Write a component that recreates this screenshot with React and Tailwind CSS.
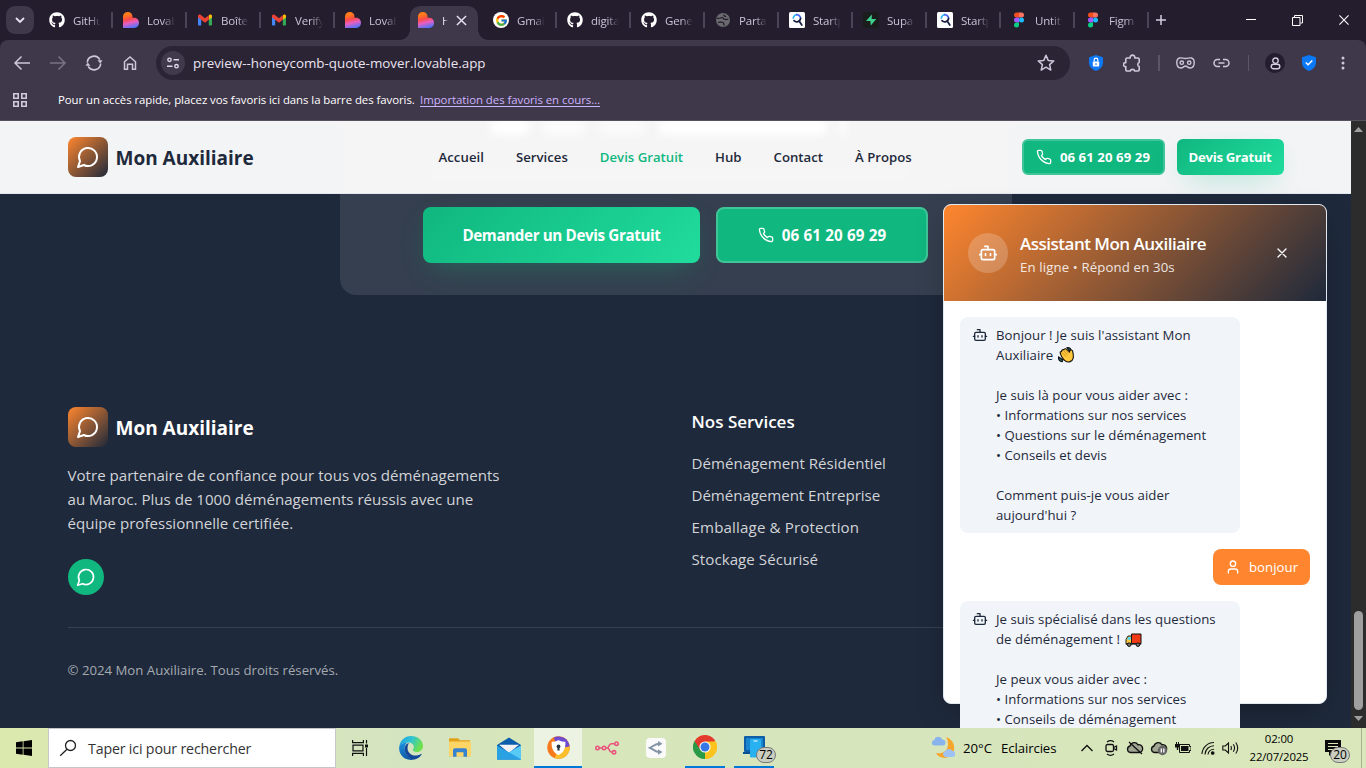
import React from "react";
import { FaGithub } from "react-icons/fa";
import { FcGoogle } from "react-icons/fc";

/* ---------- site icons ---------- */

const Stroke = ({ className, width = 2, children }) => (
  <svg className={className} viewBox="0 0 24 24" fill="none" stroke="currentColor" strokeWidth={width} strokeLinecap="round" strokeLinejoin="round">
    {children}
  </svg>
);

const ChatIcon = ({ className }) => (
  <Stroke className={className}>
    <path d="M7.9 20A9 9 0 1 0 4 16.1L2 22Z" />
  </Stroke>
);

const PhoneIcon = ({ className }) => (
  <Stroke className={className}>
    <path d="M22 16.92v3a2 2 0 0 1-2.18 2 19.79 19.79 0 0 1-8.63-3.07 19.5 19.5 0 0 1-6-6 19.79 19.79 0 0 1-3.07-8.67A2 2 0 0 1 4.11 2h3a2 2 0 0 1 2 1.72 12.84 12.84 0 0 0 .7 2.81 2 2 0 0 1-.45 2.11L8.09 9.91a16 16 0 0 0 6 6l1.27-1.27a2 2 0 0 1 2.11-.45 12.84 12.84 0 0 0 2.81.7A2 2 0 0 1 22 16.92z" />
  </Stroke>
);

const BotIcon = ({ className }) => (
  <Stroke className={className}>
    <path d="M12 8V4H8" />
    <rect width="16" height="12" x="4" y="8" rx="2" />
    <path d="M2 14h2M20 14h2M15 13v2M9 13v2" />
  </Stroke>
);

const UserIcon = ({ className }) => (
  <Stroke className={className}>
    <path d="M19 21v-2a4 4 0 0 0-4-4H9a4 4 0 0 0-4 4v2" />
    <circle cx="12" cy="7" r="4" />
  </Stroke>
);

const WaveHand = () => (
  <svg className="ml-[1px] inline-block size-4 align-[-3px]" viewBox="0 0 16 16">
    <path d="M9 .8c2-.6 3.600.3 4 2.200l-1.500.6zM.6 10c-.6 2.200 1 4.600 3.600 4.700l.7-1.700z" fill="#1c6f80" stroke="#111" strokeWidth="1.100" />
    <path d="M2.300 6.200c-.4-.9.2-2 1.200-1.600C3.600 3.200 4.600 2.300 5.800 2.800 6.300 1.500 8 1.500 8.700 2.400l2.800 2.600.3-1.400c.8-1.300 2.700-.6 2.900.7.3 1.800 1 4.200.5 6.800-.8 3.500-4.900 4.900-7.800 2.900C5.400 12.700 2.700 9 2.300 6.200z" fill="#ffc83d" stroke="#15120b" strokeWidth="1.100" />
    <path d="M4 5.400l4 4.200M5.900 4L9.500 7.900M8.200 3.500L11 6.500" stroke="#b87c0c" strokeWidth=".7" fill="none" />
  </svg>
);

const Truck = () => (
  <svg className="ml-[2px] inline-block h-4 w-[17px] align-[-4px]" viewBox="0 0 17 16">
    <path d="M6.500 2h9.500v9.500H6.500z" fill="#f03a17" stroke="#111" strokeWidth="1" />
    <path d="M1 11.800V7.500L3 4h3.500v7.800z" fill="#ffc83d" stroke="#111" strokeWidth=".9" />
    <path d="M2 7.800l1.400-2.800h2.300v2.800z" fill="#50d9ff" />
    <path d="M.8 11.300h15.400v1.400H.8z" fill="#222" />
    <circle cx="4.200" cy="12.700" r="1.800" fill="#777" stroke="#111" />
    <circle cx="12.900" cy="12.700" r="1.800" fill="#777" stroke="#111" />
  </svg>
);

/* ---------- favicons ---------- */

const Heart = () => (
  <svg className="size-4 shrink-0" viewBox="0 0 16 16">
    <defs>
      <linearGradient id="lov" x1=".35" y1="0" x2=".6" y2="1">
        <stop offset=".15" stopColor="#ff7a1a" />
        <stop offset=".42" stopColor="#fb4a4a" />
        <stop offset=".65" stopColor="#e85fc0" />
        <stop offset="1" stopColor="#4b73ff" />
      </linearGradient>
    </defs>
    <path d="M0 4.700C0 2 2 0 4.700 0S9.500 2 9.500 4.800v1h1.700C14 5.800 16 8 16 10.800S14 16 11.200 16H0z" fill="url(#lov)" />
  </svg>
);

const GmailIcon = () => (
  <svg className="size-4 shrink-0" viewBox="0 0 16 16">
    <path d="M1 4v8.500c0 .6.4 1 1 1h2.200V7z" fill="#4285f4" />
    <path d="M15 4v8.500c0 .6-.4 1-1 1h-2.200V7z" fill="#34a853" />
    <path d="M11.800 3.700V7.800L15 5.400V4c0-1.400-1.500-2-2.500-1.200z" fill="#fbbc04" />
    <path d="M1 4c0-1.400 1.500-2 2.500-1.200L8 6.200l3.800-2.900v4.500L8 10.700 4.200 7.800 1 5.400z" fill="#ea4335" />
  </svg>
);

const GithubIcon = () => <FaGithub className="size-4 shrink-0 text-white" />;

const GoogleIcon = () => (
  <span className="flex size-4 shrink-0 items-center justify-center rounded-full bg-white">
    <FcGoogle className="size-[13px]" />
  </span>
);

const GlobeIcon = () => (
  <svg className="size-4 shrink-0" viewBox="0 0 16 16">
    <circle cx="8" cy="8" r="7" fill="#6b6a6f" />
    <path d="M2 6.300c2.500.6 3.800-1 5.500-.6 1.200.3 1 1.500 2.300 1.700 1.500.3 2.400-.2 3.500 0M3 10.500c1.800-.8 3-.3 4.500-.2 1.300.2 1.700 1.600 1.300 3.200M9 2.500c-.2 1.300.8 2 2.200 1.800" stroke="#241d2e" strokeWidth="1.300" fill="none" />
  </svg>
);

const StartIcon = () => (
  <svg className="size-4 shrink-0" viewBox="0 0 16 16">
    <rect width="16" height="16" rx="1.500" fill="#fff" />
    <path d="M4.300 6.800A4 4 0 0 1 8 2.600" stroke="#26b6f5" strokeWidth="1.700" fill="none" />
    <path d="M7 2.700a4 4 0 0 1 4.600 3.600" stroke="#4f6cf2" strokeWidth="1.700" fill="none" />
    <path d="M11.600 6.300A3.900 3.900 0 0 1 5 8.700M10.300 9.200l2.500 3.800" stroke="#1b2140" strokeWidth="1.800" fill="none" strokeLinecap="round" />
  </svg>
);

const SupaIcon = () => (
  <svg className="size-4 shrink-0" viewBox="0 0 16 16">
    <rect width="16" height="16" rx="1" fill="#1b1c1c" />
    <path d="M8.800 2.500L3 8.900h5.200v4.300z" fill="#3ecf8e" />
    <path d="M7.800 13.500L13.300 7H8.200l.6-4.500-1.400 4.400v3z" fill="#3ecf8e" />
  </svg>
);

const FigmaIcon = () => (
  <svg className="size-4 shrink-0" viewBox="0 0 16 16">
    <path d="M5.500.5H8v5H5.500a2.500 2.500 0 0 1 0-5z" fill="#f24e1e" />
    <path d="M8 .5h2.500a2.500 2.500 0 0 1 0 5H8z" fill="#ff7262" />
    <path d="M5.500 5.500H8v5H5.500a2.500 2.500 0 0 1 0-5z" fill="#a259ff" />
    <circle cx="10.500" cy="8" r="2.500" fill="#1abcfe" />
    <path d="M5.500 10.500H8V13a2.500 2.500 0 1 1-2.500-2.500z" fill="#0acf83" />
  </svg>
);

/* ---------- browser ---------- */

const tabs = [
  [GithubIcon, "GitHu"],
  [Heart, "Lovab"],
  [GmailIcon, "Boîte"],
  [GmailIcon, "Verify"],
  [Heart, "Lovab"],
  [Heart, "H", true],
  [GoogleIcon, "Gmai"],
  [GithubIcon, "digita"],
  [GithubIcon, "Gene"],
  [GlobeIcon, "Parta"],
  [StartIcon, "Startp"],
  [SupaIcon, "Supa"],
  [StartIcon, "Startp"],
  [FigmaIcon, "Untit"],
  [FigmaIcon, "Figm"],
];

function Tab({ Icon, label, active, divider }) {
  if (active) {
    return (
      <div className="relative h-10 w-[74px] shrink-0 pt-1.5">
        <div className="relative ml-[1px] flex h-[34px] w-[68px] items-center rounded-t-[10px] bg-[#3f374a] pb-[6px] pl-2">
          <Icon />
          <span className="mt-px ml-2 w-[9px] text-[#e6e0ee] [mask-image:linear-gradient(to_right,#000_2px,transparent_6px)]">{label}</span>
          <svg className="ml-[5px] size-[11px]" viewBox="0 0 12 12" stroke="#e8e2f0" strokeWidth="1.600">
            <path d="M1 1l10 10M11 1L1 11" />
          </svg>
          <i className="absolute bottom-0 -left-[10px] size-[10px] bg-[radial-gradient(circle_at_0_0,transparent_9.500px,#3f374a_10px)]" />
          <i className="absolute -right-[10px] bottom-0 size-[10px] bg-[radial-gradient(circle_at_100%_0,transparent_9.500px,#3f374a_10px)]" />
        </div>
      </div>
    );
  }
  return (
    <div className="flex h-10 w-[74px] shrink-0 items-center pl-2.5">
      <Icon />
      <span className="mt-[2px] ml-2 w-[34px] whitespace-nowrap text-[#cbc3d6] [mask-image:linear-gradient(to_right,#000_16px,transparent_28px)]">{label}</span>
      <i className={divider ? "ml-[4px] h-4 w-[1.500px] shrink-0 bg-[#4b4356]" : "w-0"} />
    </div>
  );
}

function Browser() {
  return (
    <div className="h-[121px] shrink-0 bg-[#241d2e] font-['Open_Sans','Noto_Sans',sans-serif]">
      <div className="flex h-10 items-center text-[11.500px] tracking-[-0.2px]">
        <div className="mx-1.5 flex h-7 w-[28px] items-center justify-center rounded-[9px] bg-[#3f374a]">
          <svg className="size-[10px]" viewBox="0 0 10 10" fill="none" stroke="#e8e2f0" strokeWidth="1.800">
            <path d="M1 3l4 4 4-4" />
          </svg>
        </div>
        <div className="-ml-[1px] flex w-[1108px]">
          {tabs.map(([Icon, label, active], i) => (
            <Tab key={i} Icon={Icon} label={label} active={active} divider={i !== 4} />
          ))}
        </div>
        <svg className="ml-2 size-3" viewBox="0 0 12 12" stroke="#d5cde0" strokeWidth="1.500">
          <path d="M6 1v10M1 6h10" />
        </svg>
        <div className="ml-auto flex items-center gap-9 pr-[17px]">
          <svg className="size-[10px]" viewBox="0 0 10 10"><path d="M0 4.500h10" stroke="#fff" /></svg>
          <svg className="size-[11px]" viewBox="0 0 11 11" fill="none" stroke="#fff"><path d="M.5 2.500h7.500v8H.5zM2.500 2.500v-2h8v7.500h-2" /></svg>
          <svg className="size-[10px]" viewBox="0 0 11 11" stroke="#fff" strokeWidth="1.200"><path d="M.5.5l10 10M10.500.5l-10 10" /></svg>
        </div>
      </div>

      <div className="h-[81px] rounded-t-[8px] border-b border-[#56505f] bg-[#3f374a]">
        <div className="flex h-[46px] items-center">
          <div className="flex w-[156px] items-center pl-[13px]">
            <svg className="size-[18px]" viewBox="0 0 18 18" fill="none" stroke="#cfc6dc" strokeWidth="1.500"><path d="M17 9H2M8.500 2.500L2 9l6.500 6.500" /></svg>
            <svg className="ml-[18px] size-[18px]" viewBox="0 0 18 18" fill="none" stroke="#7b7287" strokeWidth="1.500"><path d="M1 9h15M9.500 2.500L16 9l-6.500 6.500" /></svg>
            <svg className="ml-[18px] size-[18px]" viewBox="0 0 18 18" fill="none" stroke="#cfc6dc" strokeWidth="1.600">
              <path d="M2.300 8.500A6.700 6.700 0 0 1 14.800 5.600M15.700 9.500A6.700 6.700 0 0 1 3.200 12.400" />
              <path d="M12.500 6.300h5L15.300 9.600zM.5 11.700h5L2.700 8.400z" fill="#cfc6dc" stroke="none" />
            </svg>
            <svg className="ml-[19px] size-4" viewBox="0 0 16 16" fill="none" stroke="#cfc6dc" strokeWidth="1.500"><path d="M2.500 6.800L8 2l5.500 4.800v7.400h-3V9.300h-5v4.900h-3z" /></svg>
          </div>
          <div className="flex h-[34px] w-[914px] items-center rounded-full bg-[#2b2434] pr-[15px] pl-[5px]">
            <span className="flex size-6 items-center justify-center rounded-full bg-[#413a4d]">
              <svg className="size-[14px]" viewBox="0 0 14 14" fill="none" stroke="#e0d9ea" strokeWidth="1.400">
                <circle cx="3.500" cy="3.800" r="1.700" /><path d="M7.500 3.800H13M1 10.200h5.500" /><circle cx="10.500" cy="10.200" r="1.700" />
              </svg>
            </span>
            <span className="mt-px ml-2 text-[13.400px] text-[#e9e3f0]">preview--honeycomb-quote-mover.lovable.app</span>
            <svg className="ml-auto size-[18px]" viewBox="0 0 18 18" fill="none" stroke="#cfc6dc" strokeWidth="1.500" strokeLinejoin="round">
              <path d="M9 1.200l2.200 5.200 5.600.5-4.200 3.700 1.200 5.500L9 13.200l-4.800 2.900 1.200-5.500L1.200 6.900l5.600-.5z" />
            </svg>
          </div>
          <div className="flex flex-1 items-center">
            <svg className="ml-[18px] h-4 w-4" viewBox="0 0 16 16">
              <path d="M8 0l7 2.200v5.300c0 4-2.600 6.800-7 8.500-4.400-1.700-7-4.500-7-8.500V2.200z" fill="#0b78f5" />
              <rect x="4.800" y="6.500" width="6.400" height="5" rx=".8" fill="#fff" /><path d="M6.200 6.500V5a1.800 1.800 0 0 1 3.600 0v1.500" fill="none" stroke="#fff" strokeWidth="1.200" /><path d="M8 8.200v1.800" stroke="#0b78f5" strokeWidth="1.200" />
            </svg>
            <svg className="ml-[19px] size-[19px]" viewBox="0 0 19 19" fill="none" stroke="#cfc6dc" strokeWidth="1.600" strokeLinejoin="round">
              <path d="M4 4h3.200c-.6-3.800 5.200-3.800 4.600 0H15c.7 0 1.200.5 1.200 1.200v3.300c-1.900.4-1.900 3.600 0 4v3.300c0 .7-.5 1.200-1.200 1.200h-3.300c-.4-2.200-4-2.200-4.400 0H4c-.7 0-1.200-.5-1.200-1.200v-3.200C-.3 13-.3 8.200 2.800 8.600V5.200C2.800 4.500 3.300 4 4 4z" />
            </svg>
            <i className="ml-[16px] h-4 w-[1.500px] bg-[#5c5468]" />
            <svg className="ml-[16px] h-3 w-[19px]" viewBox="0 0 19 12" fill="none" stroke="#cfc6dc" strokeWidth="1.400">
              <path d="M3.500 1C1.500 1.500.8 3.200.8 5.500.8 9 2.500 11 5 11c2 0 3-2 4.500-2s2.500 2 4.500 2c2.500 0 4.200-2 4.200-5.500 0-2.300-.7-4-2.700-4.500-2-.5-3.500.5-6 .5s-4-1-6-.5z" /><circle cx="5.800" cy="5.700" r="1.700" /><circle cx="13.200" cy="5.700" r="1.700" />
            </svg>
            <svg className="ml-[18px] h-[10px] w-[17px]" viewBox="0 0 17 10" fill="none" stroke="#cfc6dc" strokeWidth="1.500">
              <path d="M7 1.500H4.500a3.500 3.500 0 0 0 0 7H7M10 1.500h2.500a3.500 3.500 0 0 1 0 7H10M5.500 5h6" />
            </svg>
            <i className="ml-[18px] h-4 w-[1.500px] bg-[#5c5468]" />
            <span className="ml-4 flex size-5 items-center justify-center rounded-full bg-[#241d2e]">
              <svg className="h-[13px] w-[11px]" viewBox="0 0 11 13" fill="none" stroke="#d5cde0" strokeWidth="1.400"><circle cx="5.500" cy="3.700" r="2.700" /><rect x="1.200" y="7.200" width="8.600" height="4.600" rx="2.300" /></svg>
            </span>
            <svg className="ml-4 size-4" viewBox="0 0 16 16">
              <path d="M8 0l7 2.200v5.300c0 4-2.600 6.800-7 8.500-4.400-1.700-7-4.500-7-8.500V2.200z" fill="#0b78f5" /><path d="M4.800 7.500l2.300 2.300 4.200-4.300" stroke="#fff" strokeWidth="1.500" fill="none" />
            </svg>
            <svg className="ml-[18px] h-4 w-4" viewBox="0 0 16 16" fill="#cfc6dc"><circle cx="8" cy="3" r="1.500" /><circle cx="8" cy="8" r="1.500" /><circle cx="8" cy="13" r="1.500" /></svg>
          </div>
        </div>
        <div className="flex h-[28px] items-center pl-[13px] text-[11.400px] text-white">
          <svg className="size-[14px]" viewBox="0 0 14 14" fill="none" stroke="#d2cada" strokeWidth="1.600"><path d="M.8.8h4.400v4.400H.8zM8.800.8h4.400v4.400H8.800zM.8 8.800h4.400v4.400H.8zM8.800 8.800h4.400v4.400H8.800z" /></svg>
          <span className="ml-[31px] w-[362px] tracking-[-0.055px] whitespace-nowrap">Pour un accès rapide, placez vos favoris ici dans la barre des favoris.</span>
          <span className="tracking-[-0.04px] whitespace-nowrap text-[#cdb4ff] underline underline-offset-2">Importation des favoris en cours…</span>
        </div>
      </div>
    </div>
  );
}

/* ---------- site ---------- */

const Logo = ({ dark }) => (
  <div className="flex items-center gap-2">
    <div className="flex size-10 items-center justify-center rounded-lg bg-[linear-gradient(135deg,#ff862e,#1e293b)] text-white">
      <ChatIcon className="size-6" />
    </div>
    <span className={dark ? "mt-0.5 text-[19px] font-bold text-[#1e293b]" : "mt-0.5 text-[19px] font-bold text-white"}>Mon Auxiliaire</span>
  </div>
);

function SiteHeader() {
  return (
    <header className="relative z-10 h-[73px] shrink-0 overflow-hidden border-b border-[#e2e8f0] bg-[linear-gradient(to_right,#f3f4f6_330px,#f5f5f5_350px,#f5f5f5_1002px,#f3f4f6_1022px)]">
      <div className="absolute -top-0.5 left-[490px] flex gap-3 blur-[4px]">
        <i className="h-4 w-10 rounded-full bg-white" />
        <i className="h-4 w-11 rounded-full bg-white/70" />
        <i className="h-4 w-12 rounded-full bg-white/60" />
        <i className="h-4 w-[170px] rounded-full bg-white" />
        <i className="h-4 w-1.5 bg-white" />
      </div>
      <div className="absolute top-12 left-[430px] h-2.5 w-[480px] bg-white/20 blur-[4px]" />
      <div className="relative mx-auto flex h-[72px] w-[1216px] items-center justify-between">
        <Logo dark />
        <nav className="absolute top-[27px] left-[371px] flex gap-8 text-[13.200px] font-semibold whitespace-nowrap text-[#1e293b]">
          <span className="tracking-[0.05px]">Accueil</span>
          <span>Services</span>
          <span className="text-[#10b77f]">Devis Gratuit</span>
          <span>Hub</span>
          <span>Contact</span>
          <span>À Propos</span>
        </nav>
        <div className="flex gap-3 text-[13.200px] whitespace-nowrap text-white">
          <div className="flex h-9 w-[143px] items-center justify-center gap-2 rounded-md border-2 border-[#40c598] bg-[#10b77f] font-bold">
            <PhoneIcon className="size-4" />
            <span className="mt-px tracking-[0.08px]">06 61 20 69 29</span>
          </div>
          <div className="flex h-9 w-[107px] items-center justify-center rounded-md bg-[linear-gradient(135deg,#10b77f,#20dc9d)] pt-px font-bold tracking-[-0.3px] shadow-[0_10px_30px_-10px_rgba(16,183,127,0.4)]">Devis Gratuit</div>
        </div>
      </div>
    </header>
  );
}

function Cta() {
  return (
    <section className="mx-auto flex h-[101px] w-[672px] shrink-0 justify-center gap-4 rounded-b-2xl bg-[#353f4f] pt-[13px] text-[15.200px] font-bold whitespace-nowrap text-white">
      <div className="flex h-14 w-[277px] items-center justify-center rounded-lg bg-[linear-gradient(135deg,#10b77f,#20dc9d)] pt-px tracking-[-0.37px] shadow-[0_10px_30px_-10px_rgba(16,183,127,0.4)]">Demander un Devis Gratuit</div>
      <div className="flex h-14 w-[212px] items-center justify-center gap-2 rounded-lg border-2 border-[#40c598] bg-[#10b77f]">
        <PhoneIcon className="size-4" />
        <span className="mt-px tracking-[0.15px]">06 61 20 69 29</span>
      </div>
    </section>
  );
}

function Footer() {
  return (
    <footer className="mx-auto mt-28 w-[1216px]">
      <div className="grid h-[220px] grid-cols-4 gap-8">
        <div className="col-span-2">
          <Logo />
          <p className="mt-4 w-[448px] text-[15.100px] leading-6 text-[#d2d4d8]">
            Votre partenaire de confiance pour tous vos déménagements<br />
            au Maroc. Plus de 1000 déménagements réussis avec une<br />
            équipe professionnelle certifiée.
          </p>
          <div className="mt-6 flex size-9 items-center justify-center rounded-full bg-[#10b77f] text-white">
            <ChatIcon className="size-5" />
          </div>
        </div>
        <div className="whitespace-nowrap">
          <h3 className="pt-px text-[17px] leading-7 font-semibold text-white">Nos Services</h3>
          <ul className="mt-[15px] flex flex-col gap-2 text-[15.100px] leading-6 text-[#d2d4d8]">
            <li>Déménagement Résidentiel</li>
            <li className="tracking-[-0.05px]">Déménagement Entreprise</li>
            <li className="tracking-[0.15px]">Emballage &amp; Protection</li>
            <li className="tracking-[0.05px]">Stockage Sécurisé</li>
          </ul>
        </div>
      </div>
      <div className="border-t border-[#354051] pt-8 text-[13.200px] leading-5 text-[#a5a9b1]">© 2024 Mon Auxiliaire. Tous droits réservés.</div>
    </footer>
  );
}

const BotBubble = ({ children }) => (
  <div className="flex w-[280px] gap-2 rounded-lg bg-[#f1f4f9] px-3 py-2">
    <BotIcon className="mt-0.5 size-4 shrink-0" />
    <div className="whitespace-pre">{children}</div>
  </div>
);

function Chat() {
  return (
    <aside className="absolute top-[83px] left-[943px] z-20 h-[500px] w-96 rounded-lg border border-[#e2e8f0] bg-white text-[13.200px] leading-5 tracking-[0.04px] text-[#1e293b] shadow-[0_10px_30px_-8px_rgba(0,0,0,0.35)]">
      <div className="flex h-24 items-center rounded-t-[7px] bg-[linear-gradient(135deg,#ff862e,#1e293b)] px-6 text-white">
        <div className="flex size-10 items-center justify-center rounded-full bg-white/20">
          <BotIcon className="size-5" />
        </div>
        <div className="ml-3 whitespace-nowrap">
          <div className="pt-px text-[17px] leading-[27px] font-semibold tracking-[-0.5px]">Assistant Mon Auxiliaire</div>
          <div className="leading-5 tracking-[0.14px] text-white/85">En ligne • Répond en 30s</div>
        </div>
        <div className="ml-auto flex size-10 items-center justify-center">
          <Stroke className="size-4"><path d="M18 6L6 18M6 6l12 12" /></Stroke>
        </div>
      </div>
      <div className="flex flex-col gap-4 p-4">
        <BotBubble>
          Bonjour ! Je suis l'assistant Mon{"\n"}Auxiliaire <WaveHand />{"\n\n"}Je suis là pour vous aider avec :{"\n"}• Informations sur nos services{"\n"}• Questions sur le déménagement{"\n"}• Conseils et devis{"\n\n"}Comment puis-je vous aider{"\n"}aujourd'hui ?
        </BotBubble>
        <div className="flex w-[97px] gap-2 self-end rounded-lg bg-[#ff862e] px-3 py-2 text-white">
          <UserIcon className="mt-0.5 size-4 shrink-0" />
          bonjour
        </div>
        <BotBubble>
          Je suis spécialisé dans les questions{"\n"}de déménagement ! <Truck />{"\n\n"}Je peux vous aider avec :{"\n"}• Informations sur nos services{"\n"}• Conseils de déménagement
        </BotBubble>
      </div>
    </aside>
  );
}

function Scrollbar() {
  return (
    <div className="flex w-[15px] shrink-0 flex-col items-center bg-[#2c2c2c] pt-1.5 pb-[7px]">
      <svg className="h-[5px] w-[9px]" viewBox="0 0 9 5" fill="#a0a0a0"><path d="M0 5L4.500 0 9 5z" /></svg>
      <i className="mt-auto h-[99px] w-[9px] rounded-full bg-[#9f9f9f]" />
      <svg className="mt-1.5 h-[5px] w-[9px]" viewBox="0 0 9 5" fill="#a0a0a0"><path d="M0 0L4.500 5 9 0z" /></svg>
    </div>
  );
}

/* ---------- taskbar ---------- */

const EdgeIcon = () => (
  <svg className="size-6" viewBox="0 0 24 24">
    <defs>
      <linearGradient id="e1" x1="0" y1="0" x2="1" y2=".4"><stop offset="0" stopColor="#1b9de2" /><stop offset=".5" stopColor="#2fc3d4" /><stop offset="1" stopColor="#6fe04b" /></linearGradient>
      <linearGradient id="e2" x1="0" y1="0" x2="0" y2="1"><stop offset="0" stopColor="#1b93de" /><stop offset="1" stopColor="#0d57a4" /></linearGradient>
    </defs>
    <path d="M.3 10.500C1 4.500 6 0 12 0c7 0 12 4.800 12 10 0 3.600-2.700 6-6 6-2.600 0-4.200-.9-4.200-1.900 0-.8 1-1.200 1-3 0-2.500-2.300-4.600-5.600-4.600C5 6.500 1.500 8 .3 10.500z" fill="url(#e1)" />
    <path d="M.2 11C1 8 4.500 6.300 8.500 6.500c-2 1.200-3 3.500-2.800 6.300.3 4.700 3.500 8.500 8.200 10.900C6 25-.6 19 .2 11z" fill="url(#e2)" />
    <path d="M8.600 11.500c-.6 5 4 8.500 8.700 8 2-.2 3.500-.9 4.800-1.600.5-.2.800.2.500.7-2 3.200-5.200 5-8.700 5.100C9.200 22 5.600 17.500 5.700 12.800c0-2.800 1.500-5 4.300-6-1 1.500-1.200 3-1.400 4.700z" fill="#14479a" />
  </svg>
);

const FolderIcon = () => (
  <svg className="h-5 w-[22px]" viewBox="0 0 22 20">
    <path d="M0 1.500C0 .7.500.3 1 .3h8l2 2h10v16H0z" fill="#e0a11b" />
    <path d="M0 3.500h21c.6 0 1 .4 1 1V18H0z" fill="#fdd567" />
    <path d="M4 12.500c0-1.500.8-2.300 2-2.300h10c1.200 0 2 .8 2 2.300v6.300h-3.500v-4.500h-7v4.500H4z" fill="#3583d0" />
  </svg>
);

const MailIcon = () => (
  <svg className="h-[23px] w-6" viewBox="0 0 24 23">
    <path d="M12 .5L24 8v14.500H0V8z" fill="#0b5eab" />
    <path d="M2 7.800h20L12 16z" fill="#f2f2f5" />
    <path d="M0 8.500l12 7 12-7v14H0z" fill="#2aa2e2" /><path d="M12 15.500l12-7v14z" fill="#57cbf5" /><path d="M12 15.500L24 22.500H0z" fill="#2ba0e4" />
  </svg>
);

const SecureIcon = () => (
  <svg className="size-[23px]" viewBox="0 0 24 24">
    <circle cx="12" cy="12" r="11.700" fill="#f7791d" />
    <path d="M7 1.500A11.700 11.700 0 0 1 23.600 11L12 13z" fill="#6e4bd0" />
    <path d="M23.700 11A11.700 11.700 0 0 1 8 23L12 13z" fill="#fbbf2c" />
    <path d="M12 5c2 1.200 4 1.700 6.500 1.700.4 5.800-1.500 10-6.500 12.500-5-2.500-6.900-6.700-6.500-12.500C8 6.700 10 6.200 12 5z" fill="#fff" stroke="#fff" strokeWidth="1.500" strokeLinejoin="round" />
    <circle cx="12" cy="10.900" r="2" fill="#26323f" /><path d="M11.200 11h1.600l.4 4.200h-2.400z" fill="#26323f" />
  </svg>
);

const FlowIcon = () => (
  <svg className="h-[14px] w-6" viewBox="0 0 24 14" fill="none" stroke="#e9557c" strokeWidth="1.600">
    <circle cx="2.500" cy="7" r="1.700" /><circle cx="9" cy="7" r="1.700" /><circle cx="21.500" cy="2.700" r="1.700" /><circle cx="19" cy="11.300" r="1.700" />
    <path d="M4.200 7h3.100M10.700 7h1.500c2 0 1.500-4.300 4-4.300h3.500M12.500 7c2 0 1.500 4.300 4.500 4.300" />
  </svg>
);

const SplitIcon = () => (
  <svg className="size-5" viewBox="0 0 20 20">
    <rect width="20" height="20" rx="4" fill="#fafafa" />
    <path d="M13.500 5.800C9 5.800 7.500 8.300 4 9.800c3.500 1.500 5 4.200 9.500 4.200" fill="none" stroke="#8493a5" strokeWidth="1.900" /><path d="M12 3l4.500 2.800-4.500 2.800zM12 11.200l4.500 2.800-4.500 2.800z" fill="#8493a5" />
  </svg>
);

const ChromeIcon = () => (
  <svg className="size-6" viewBox="0 0 24 24">
    <path d="M12 12L1.600 6A12 12 0 0 1 22.400 6z" fill="#e33b2e" /><path d="M12 12L22.400 6A12 12 0 0 1 12 24z" fill="#fcc31e" /><path d="M12 12v12A12 12 0 0 1 1.600 6z" fill="#2a9a47" />
    <path d="M12 6.500h10.700A12 12 0 0 1 12 24l4.800-9.200z" fill="#fcc31e" /><path d="M7.200 14.800L1.600 6 12 6.500h10.600L12 6.600z" fill="#e33b2e" />
    <circle cx="12" cy="12" r="5.600" fill="#fff" /><circle cx="12" cy="12" r="4.500" fill="#3578e5" />
  </svg>
);

const PhoneLinkIcon = () => (
  <svg className="h-[22px] w-[23px]" viewBox="0 0 23 22">
    <rect x="1" y="0" width="21" height="16" rx="1" fill="#0e5fa8" /><rect x="3" y="2" width="17" height="12" fill="#1a86d0" /><path d="M0 16h15v2H0z" fill="#0a4f91" />
    <rect x="7" y="3" width="11" height="18.500" rx="1.300" fill="#28b1f0" /><path d="M10.500 5h4" stroke="#fff" />
  </svg>
);

const Cloud = ({ children }) => (
  <svg className="h-4 w-[18px]" viewBox="0 0 18 16" fill="#9fa792" stroke="#111" strokeWidth="1.300">
    <path d="M4.500 12.500a3.300 3.300 0 0 1-.4-6.500A4.300 4.300 0 0 1 12 4.800a3.900 3.900 0 0 1 1.500 7.700z" />
    {children}
  </svg>
);

function Taskbar() {
  return (
    <div className="flex h-10 shrink-0 items-center bg-[linear-gradient(to_right,#dbe9ae_0,#d9e7b8_200px,#d4e4c0_400px,#d8e6bb_520px,#d7e5bd_900px,#d9e7ba_1366px)] font-['Open_Sans','Noto_Sans',sans-serif] text-[13.200px] text-black">
      <div className="flex w-12 justify-center">
        <svg className="size-4" viewBox="0 0 16 16"><path d="M0 2.300L6.700 1.300v6.300H0zM7.500 1.200L16 0v7.600H7.500zM0 8.400h6.700v6.300L0 13.700zM7.500 8.400H16V16l-8.500-1.200z" /></svg>
      </div>
      <div className="flex h-10 w-[288px] items-center border border-[#c6c6cb] bg-white pl-[10px] text-[#333]">
        <svg className="size-[18px]" viewBox="0 0 18 18" fill="none" stroke="#222" strokeWidth="1.300"><circle cx="11.500" cy="6.500" r="5" /><path d="M8 10.200L1.200 16.800" /></svg>
        <span className="mt-0.5 ml-[11px] text-[14.200px] tracking-[-0.16px] whitespace-nowrap">Taper ici pour rechercher</span>
      </div>
      <div className="flex w-12 justify-center">
        <svg className="size-4" viewBox="0 0 16 16" fill="none" stroke="#111" strokeWidth="1.200"><path d="M.6 0v2.600h10.800V0M.6 16v-2.600h10.800V16M1 5.200h10v5.600H1zM14.500 0v3.500M14.500 8v8" /><path d="M13 4.500h3v3h-3z" fill="#111" stroke="none" /></svg>
      </div>
      <div className="flex h-10 items-stretch">
        <div className="flex w-[54px] items-center justify-center"><EdgeIcon /></div>
        <div className="flex w-11 items-center justify-center"><FolderIcon /></div>
        <div className="flex w-[52px] items-center justify-center pl-[2px]"><MailIcon /></div>
        <div className="flex w-12 items-center justify-center border-b-2 border-[#0078d7] bg-[#edf3e2]"><SecureIcon /></div>
        <div className="flex w-[49px] items-center justify-center"><FlowIcon /></div>
        <div className="flex w-[50px] items-center justify-center"><SplitIcon /></div>
        <div className="mr-[6px] ml-1 flex w-10 items-center justify-center border-b-2 border-[#0078d7]"><ChromeIcon /></div>
        <div className="relative ml-[3px] flex w-10 items-center border-b-2 border-[#0078d7] pl-[9px]">
          <PhoneLinkIcon />
          <span className="absolute top-[19px] left-[22px] flex h-4 w-5 items-center justify-center rounded-full border border-[#777] bg-[#c9cec0] text-[12px]">72</span>
        </div>
      </div>
      <div className="ml-auto flex items-center">
        <svg className="size-6" viewBox="0 0 24 24">
          <path d="M15 1c6 2 9 7 8 12.500C22 20 16 23 11 21.500c-3-1-5-2.500-6-4.500 5 1 10-1 11.500-5.500C17.500 8 17 4 15 1z" fill="#f7a52b" />
          <path d="M3 9.500a2.800 2.800 0 0 1 .3-5.500 4.200 4.200 0 0 1 8-.5 3 3 0 0 1 .2 6z" fill="#89b3ec" /><path d="M14 21a3 3 0 0 1 .3-5.700 4 4 0 0 1 7-.3 3 3 0 0 1 .2 6z" fill="#9dc2f3" />
        </svg>
        <span className="mt-px ml-2 w-[38px] whitespace-nowrap">20°C</span>
        <span className="mt-px w-20 tracking-[-0.1px] whitespace-nowrap">Eclaircies</span>
        <svg className="h-2 w-3" viewBox="0 0 12 8" fill="none" stroke="#111" strokeWidth="1.300"><path d="M.5 7L6 1.500 11.500 7" /></svg>
        <svg className="ml-3 h-4 w-[13px]" viewBox="0 0 13 16" fill="none" stroke="#111" strokeWidth="1.300"><rect x="1" y="4.500" width="7.500" height="7" rx="1.500" /><path d="M8.500 7.500l3-1.500v4l-3-1.500M2 2c2-1.500 5-1.500 7 0M2 14c2 1.500 5 1.500 7 0" /></svg>
        <span className="ml-2 flex"><Cloud><path d="M3 2l13 12" /></Cloud></span>
        <span className="ml-[6px] flex"><Cloud><circle cx="12.500" cy="10.500" r="4.700" fill="#666" stroke="none" /><path d="M11.300 8.500v4M13.800 8.500v4" stroke="#fff" /></Cloud></span>
        <svg className="ml-[7px] h-3 w-4" viewBox="0 0 16 12"><path d="M4.500 2.500h10v2H16v4h-1.500v2h-10z" fill="none" stroke="#111" /><path d="M6 4h7.500v5H6zM0 2h5v3.500H3.200V8H1.800V5.500H0zM1 0h1v2H1zM3 0h1v2H3z" fill="#111" /></svg>
        <svg className="ml-[10px] size-[14px]" viewBox="0 0 14 14" fill="none" stroke="#111" strokeWidth="1.100"><path d="M1 13A12 12 0 0 1 13 1.500M4 13.500A9 9 0 0 1 13 4.700M7 13.500a6 6 0 0 1 6-5.300" /><circle cx="11.700" cy="12" r="1.300" fill="#111" /></svg>
        <svg className="ml-[7px] h-[14px] w-[17px]" viewBox="0 0 17 14" fill="none" stroke="#111" strokeWidth="1.100"><path d="M.8 5h2.500L6.500 2v10L3.300 9H.8zM8.800 5c.8 1.300.8 2.700 0 4M11.300 3.200c1.500 2.300 1.500 5.300 0 7.600M13.800 1.500c2.300 3.300 2.300 7.700 0 11" /></svg>
        <div className="ml-2 flex w-[64px] flex-col items-center text-[11.400px] leading-[18px] tracking-[-0.15px] whitespace-nowrap"><span>02:00</span><span>22/07/2025</span></div>
        <div className="relative ml-[14px] h-10 w-[28px]">
          <svg className="mt-3 size-4" viewBox="0 0 16 16"><path d="M0 0h16v12H8l-4 4v-4H0z" fill="#0b0b0b" /><path d="M3 3.500h10M3 6.500h10M3 9.500h6" stroke="#d9e7ba" /></svg>
          <span className="absolute top-[19px] left-[5px] flex h-4 w-5 items-center justify-center rounded-full border border-[#777] bg-[#c9cec0] text-[12px]">20</span>
        </div>
        <i className="ml-[8px] h-10 w-[5px] border-l border-[#a9b393]" />
      </div>
    </div>
  );
}

export default function App() {
  return (
    <div className="flex h-[768px] w-[1366px] flex-col overflow-hidden font-['Open_Sans','Noto_Sans',sans-serif]">
      <Browser />
      <div className="flex min-h-0 flex-1">
        <main className="relative flex w-[1351px] flex-col overflow-hidden bg-[#1e293b]">
          <SiteHeader />
          <Cta />
          <Footer />
          <Chat />
        </main>
        <Scrollbar />
      </div>
      <Taskbar />
    </div>
  );
}
